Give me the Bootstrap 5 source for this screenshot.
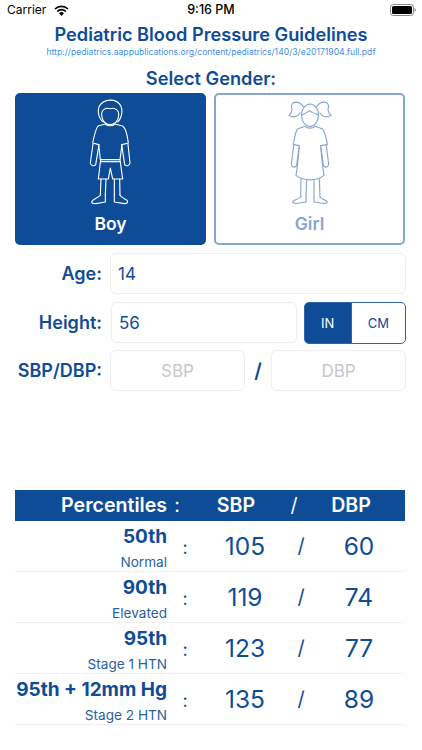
<!DOCTYPE html>
<html lang="en">
<head>
<meta charset="utf-8">
<title>Pediatric Blood Pressure Guidelines</title>
<link rel="stylesheet" href="https://cdn.jsdelivr.net/npm/bootstrap@5.3.0/dist/css/bootstrap.min.css">
<style>
html,body{height:750px;overflow:hidden;background:#fff}
body{font-family:Inter,"Liberation Sans",sans-serif;color:#0f4c97}
.status-strip{height:20px;padding:0 6px 0 7px;color:#000;font-size:12px;position:relative}
.status-time{font-weight:500;font-size:12.5px}
.page-title{font-size:18.2px;font-weight:600;line-height:22px;margin:3px 0 0}
.page-link{font-size:8.65px;line-height:12px;margin:1px 0 0;color:#3f8fe3;text-decoration:none;display:block}
.pick-title{font-size:18.2px;font-weight:600;line-height:22px;margin:9px 0 4px}
.gender-row{padding:0 17px 0 15px;gap:8px;height:152px}
.gender-tile{flex:1 1 0;border-radius:5px;border:2px solid #0f4c97;background:#0f4c97;color:#fff;padding:0;font-size:17.5px;font-weight:600;line-height:20px}
.gender-tile.is-off{background:#fff;border-color:#87a5cf;color:#87a5cf}
.gender-tile svg{display:block;margin:3px auto 0;width:44px;height:110px}
.gender-tile span{display:block;margin-top:6px}
.field-row{padding-right:16px;height:41px}
.field-label{width:102px;text-align:right;font-size:18px;font-weight:600;margin-right:8px;flex:none;white-space:nowrap}
.field-row.is-tall .field-label{margin-right:9px}
.field-row.is-pair{margin-top:7px}
.form-control.bp-input{height:41px;border-radius:6px;border:1px solid #eeeeee;color:#0f4c97;font-size:17px;padding:0 7px;box-shadow:none}
.form-control.bp-input::placeholder{color:#c8c8cc}
.form-control.bp-center{text-align:center}
.unit-group{width:102px;height:42px;margin-left:7px;flex:none}
.unit-group .btn{font-size:13px;padding:0;border-color:#2f64a8;color:#0f4c97;border-radius:5px;background:#fff;line-height:40px}
.unit-group .btn.active{background:#0f4c97;color:#fff}
.bp-slash{width:26px;flex:none;text-align:center;font-weight:600;font-size:20px}
.result-wrap{margin:99px 17px 0 15px}
.result-head{display:grid;grid-template-columns:152px 20px 98px 18px 96px;height:31px;background:#0f4c97;color:#fff;align-items:center;font-size:19.6px;font-weight:600;line-height:31px}
.result-row{display:grid;grid-template-columns:152px 36px 84px 28px 88px;height:51px;border-bottom:1px solid #eeeeee;align-items:center}
.percent-cell{text-align:right;white-space:nowrap;padding-top:3px}
.percent-main{font-size:19px;font-weight:700;line-height:22px}
.percent-sub{font-size:13.6px;line-height:16px;margin-top:6px;color:#2b5f9f}
.value-cell{text-align:center;font-size:24.5px;line-height:30px;font-weight:400}
.slash-cell{text-align:center;font-size:20px;line-height:30px}
.colon-cell{text-align:center;font-size:18px;font-weight:400;padding-top:3px}
.slash-head{font-weight:400}
.result-head .percent-cell{padding-top:0}
</style>
</head>
<body>
<div class="status-strip d-flex align-items-center justify-content-between">
  <div class="d-flex align-items-center gap-2">
    <span>Carrier</span>
    <svg width="15" height="11" viewBox="0 0 15 11" aria-hidden="true"><path d="M7.500 11 L5 8.200 A3.600 3.600 0 0 1 10 8.200 Z" fill="#000"/><path d="M3.200 6.500 A6 6 0 0 1 11.800 6.500" fill="none" stroke="#000" stroke-width="1.700"/><path d="M1 4 A9.200 9.200 0 0 1 14 4" fill="none" stroke="#000" stroke-width="1.700"/></svg>
  </div>
  <span class="status-time position-absolute top-50 start-50 translate-middle">9:16 PM</span>
  <svg width="26" height="12" viewBox="0 0 26 12" aria-hidden="true"><rect x=".5" y=".5" width="23" height="11" rx="2.800" fill="none" stroke="#888"/><rect x="2" y="2" width="20" height="8" rx="1.500" fill="#000"/><path d="M24.500 4v4c.8-.2 1.300-1 1.300-2s-.5-1.800-1.300-2z" fill="#888"/></svg>
</div>

<div class="text-center">
  <h1 class="page-title">Pediatric Blood Pressure Guidelines</h1>
  <a class="page-link" href="#">http://pediatrics.aappublications.org/content/pediatrics/140/3/e20171904.full.pdf</a>
  <h2 class="pick-title">Select Gender:</h2>
</div>

<div class="d-flex gender-row">
  <button type="button" class="gender-tile d-flex flex-column align-items-center">
    <svg viewBox="270 40 130 330" fill="none" stroke="#fff" stroke-width="3.400" stroke-linejoin="round" stroke-linecap="round" aria-hidden="true">
      <path d="M312 112C295 100 292 70 305 58C320 42 350 42 362 60C372 75 368 100 355 112"/>
      <path d="M307 92C305 75 320 68 332 72C345 68 360 75 358 92C358 110 345 120 332 120C320 120 308 110 307 92Z"/>
      <path d="M318 118L296 124C288 135 282 165 280 175L298 180L303 225H362L368 180L387 175C384 150 378 130 370 124L347 118C340 125 325 125 318 118Z"/>
      <path d="M281 178L273 235C275 245 285 245 289 240L299 180M386 178L392 235C390 245 380 245 376 240L367 180"/>
      <path d="M304 225L297 283H327L333 250L340 283H370L362 225M304 231H362"/>
      <path d="M305 283L303 330M320 283L318 330M345 283V330M361 283L362 330"/>
      <path d="M303 332C295 340 278 345 277 352C277 357 282 357 290 357L318 352V330M345 330V352L375 357C385 357 387 352 383 347C375 342 365 338 361 330"/>
    </svg>
    <span>Boy</span>
  </button>
  <button type="button" class="gender-tile is-off d-flex flex-column align-items-center">
    <svg viewBox="235 40 130 330" fill="none" stroke="#87a5cf" stroke-width="3.400" stroke-linejoin="round" stroke-linecap="round" aria-hidden="true">
      <path d="M280 65C265 45 240 50 245 70C250 80 238 90 237 92C250 100 262 98 270 85M320 65C335 45 360 50 355 70C350 80 362 90 363 92C350 100 338 98 330 85"/>
      <path d="M275 95C272 72 288 58 300 58C312 58 328 72 325 95C325 112 312 126 300 126C288 126 275 112 275 95Z"/>
      <path d="M277 90C285 88 292 82 298 78C305 84 315 88 323 90"/>
      <path d="M285 125L262 133C255 145 252 170 250 180L268 183C265 220 262 250 258 272C280 290 320 290 342 272C338 250 335 220 332 183L352 180C350 165 345 145 338 133L315 125C308 132 292 132 285 125Z"/>
      <path d="M251 183L244 238C246 250 258 250 260 240L267 190M349 183L356 238C354 250 342 250 340 240L333 190"/>
      <path d="M273 283L272 337M290 287L288 337M312 287V337M328 283L330 337"/>
      <path d="M272 337C265 345 250 345 248 352C248 358 260 357 288 352V337M312 337V352C340 357 352 358 352 352C350 345 335 345 330 337"/>
    </svg>
    <span>Girl</span>
  </button>
</div>

<div class="d-flex align-items-center field-row mt-2">
  <label class="field-label" for="ageBox">Age:</label>
  <input id="ageBox" class="form-control bp-input" value="14">
</div>
<div class="d-flex align-items-center field-row is-tall mt-2">
  <label class="field-label" for="heightBox">Height:</label>
  <input id="heightBox" class="form-control bp-input" value="56">
  <div class="btn-group unit-group" role="group">
    <button type="button" class="btn active">IN</button>
    <button type="button" class="btn">CM</button>
  </div>
</div>
<div class="d-flex align-items-center field-row is-pair">
  <label class="field-label" for="sbpBox">SBP/DBP:</label>
  <input id="sbpBox" class="form-control bp-input bp-center" placeholder="SBP">
  <span class="bp-slash">/</span>
  <input class="form-control bp-input bp-center" placeholder="DBP" aria-label="DBP">
</div>

<div class="result-wrap">
  <div class="result-head">
    <div class="percent-cell">Percentiles</div>
    <div class="text-center slash-head">:</div>
    <div class="text-center">SBP</div>
    <div class="text-center slash-head">/</div>
    <div class="text-center">DBP</div>
  </div>
  <div class="result-row">
    <div class="percent-cell"><div class="percent-main">50th</div><div class="percent-sub">Normal</div></div>
    <div class="colon-cell">:</div><div class="value-cell">105</div><div class="slash-cell">/</div><div class="value-cell">60</div>
  </div>
  <div class="result-row">
    <div class="percent-cell"><div class="percent-main">90th</div><div class="percent-sub">Elevated</div></div>
    <div class="colon-cell">:</div><div class="value-cell">119</div><div class="slash-cell">/</div><div class="value-cell">74</div>
  </div>
  <div class="result-row">
    <div class="percent-cell"><div class="percent-main">95th</div><div class="percent-sub">Stage 1 HTN</div></div>
    <div class="colon-cell">:</div><div class="value-cell">123</div><div class="slash-cell">/</div><div class="value-cell">77</div>
  </div>
  <div class="result-row">
    <div class="percent-cell"><div class="percent-main">95th + 12mm Hg</div><div class="percent-sub">Stage 2 HTN</div></div>
    <div class="colon-cell">:</div><div class="value-cell">135</div><div class="slash-cell">/</div><div class="value-cell">89</div>
  </div>
</div>
<script src="https://cdn.jsdelivr.net/npm/bootstrap@5.3.0/dist/js/bootstrap.bundle.min.js"></script>
</body>
</html>
